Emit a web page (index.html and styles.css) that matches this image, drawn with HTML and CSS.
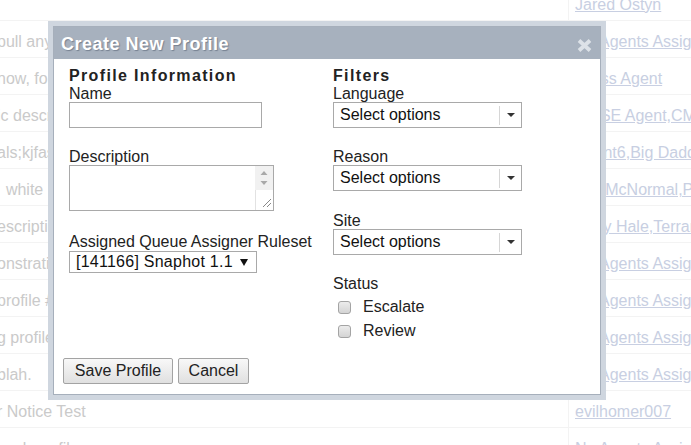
FILE: index.html
```html
<!DOCTYPE html>
<html>
<head>
<meta charset="utf-8">
<title>Create New Profile</title>
<link rel="stylesheet" href="styles.css">
</head>
<body>
<div class="table">
  <div class="row"><div class="c1"></div><div class="c2"><a>Jared Ostyn</a></div></div>
  <div class="row"><div class="c1"><span class="clip">pull anything</span></div><div class="c2"><a>No Agents Assigned</a></div></div>
  <div class="row"><div class="c1"><span class="clip">now, for</span></div><div class="c2"><a>Cross Agent</a></div></div>
  <div class="row"><div class="c1"><span class="clip">ic description</span></div><div class="c2"><a>CMSE Agent,CMI Agent</a></div></div>
  <div class="row"><div class="c1"><span class="clip">als;kjfasdf</span></div><div class="c2"><a>Agent6,Big Daddy</a></div></div>
  <div class="row"><div class="c1"><span class="clip">&nbsp;&nbsp;white</span></div><div class="c2"><a>Joe McNormal,Patty</a></div></div>
  <div class="row"><div class="c1"><span class="clip">escription</span></div><div class="c2"><a>Andy Hale,Terrance</a></div></div>
  <div class="row"><div class="c1"><span class="clip">onstration</span></div><div class="c2"><a>No Agents Assigned</a></div></div>
  <div class="row"><div class="c1"><span class="clip">profile #2</span></div><div class="c2"><a>No Agents Assigned</a></div></div>
  <div class="row"><div class="c1"><span class="clip">g profile</span></div><div class="c2"><a>No Agents Assigned</a></div></div>
  <div class="row"><div class="c1"><span class="clip">blah.</span></div><div class="c2"><a>No Agents Assigned</a></div></div>
  <div class="row"><div class="c1">r Notice Test</div><div class="c2"><a>evilhomer007</a></div></div>
  <div class="row"><div class="c1">nack profile</div><div class="c2"><a>No Agents Assigned</a></div></div>
</div>

<div class="dialog">
  <div class="dlg-inner">
    <div class="titlebar">
      <span class="title">Create New Profile</span>
      <svg class="close" width="15" height="13" viewBox="0 0 15 13"><path d="M2 1.5 L13 11.5 M13 1.5 L2 11.5" stroke="#dde2e8" stroke-width="3.8" stroke-linecap="butt"/></svg>
    </div>
    <div class="content">
      <div class="col col-left">
        <h3 class="heading">Profile Information</h3>
        <label class="lbl">Name</label>
        <input class="txt" type="text">
        <label class="lbl gap">Description</label>
        <div class="ta-wrap">
          <textarea class="ta"></textarea>
          <svg class="sb" width="18" height="44" viewBox="0 0 18 44">
            <rect x="0" y="0" width="18" height="24" fill="#f1f1f1"/>
            <polygon points="5.5,9 12.5,9 9,5" fill="#a9a9a9"/>
            <polygon points="5.5,15 12.5,15 9,19" fill="#a9a9a9"/>
            <line x1="0.5" y1="24" x2="0.5" y2="44" stroke="#e2e2e2"/>
            <line x1="8" y1="41" x2="16" y2="33" stroke="#888"/>
            <line x1="12" y1="41" x2="16" y2="37" stroke="#888"/>
          </svg>
        </div>
        <label class="lbl gap2">Assigned Queue Assigner Ruleset</label>
        <div class="rs">
          <span class="rs-text">[141166] Snaphot 1.1</span>
          <svg class="rs-arrow" width="8" height="7" viewBox="0 0 8 7"><polygon points="0,0 8,0 4,7" fill="#111"/></svg>
        </div>
      </div>
      <div class="col col-right">
        <h3 class="heading">Filters</h3>
        <label class="lbl">Language</label>
        <div class="ms"><span class="ms-text">Select options</span><span class="ms-arrow"><svg width="8" height="4" viewBox="0 0 8 4"><polygon points="0,0 8,0 4,4" fill="#333"/></svg></span></div>
        <label class="lbl gap">Reason</label>
        <div class="ms"><span class="ms-text">Select options</span><span class="ms-arrow"><svg width="8" height="4" viewBox="0 0 8 4"><polygon points="0,0 8,0 4,4" fill="#333"/></svg></span></div>
        <label class="lbl gap3">Site</label>
        <div class="ms"><span class="ms-text">Select options</span><span class="ms-arrow"><svg width="8" height="4" viewBox="0 0 8 4"><polygon points="0,0 8,0 4,4" fill="#333"/></svg></span></div>
        <label class="lbl gap4">Status</label>
        <div class="checks">
          <label class="check"><input type="checkbox" class="cb"><span>Escalate</span></label>
          <label class="check"><input type="checkbox" class="cb"><span>Review</span></label>
        </div>
      </div>
    </div>
    <div class="buttons">
      <button class="btn btn-save">Save Profile</button>
      <button class="btn btn-cancel">Cancel</button>
    </div>
  </div>
</div>
</body>
</html>
```

FILE: styles.css
```css
html, body {
  margin: 0;
  padding: 0;
}
body {
  width: 691px;
  height: 445px;
  overflow: hidden;
  position: relative;
  background: #fff;
  font-family: "Liberation Sans", Arial, sans-serif;
  font-size: 16px;
  color: #222;
}

/* background table */
.table {
  margin-top: -16px;
}
.row {
  display: flex;
  height: 37px;
  box-sizing: border-box;
  border-bottom: 1px solid #f3f3f3;
}
.c1 {
  width: 568px;
  padding-top: 12px;
  line-height: 18px;
  white-space: nowrap;
  overflow: hidden;
  text-indent: -3px;
  color: #cacaca;
}
.clip {
  display: block;
  width: 48px;
  overflow: hidden;
}
.c2 {
  flex: 1;
  border-left: 1px solid #f3f3f3;
  padding: 12px 0 0 6px;
  line-height: 18px;
  white-space: nowrap;
  overflow: hidden;
}
.c2 a {
  color: #c8cfe2;
  text-decoration: underline;
}

/* dialog */
.dialog {
  position: absolute;
  left: 48px;
  top: 21px;
  width: 558px;
  height: 379px;
  box-sizing: border-box;
  border: 5px solid #cfd6df;
  background: #fff;
}
.dlg-inner {
  height: 100%;
  box-sizing: border-box;
  border: 1px solid #a6afbb;
  display: flex;
  flex-direction: column;
}
.titlebar {
  height: 32px;
  flex: none;
  background: #a7b1be;
  display: flex;
  align-items: center;
  padding: 2px 8px 0 7px;
  box-sizing: border-box;
}
.title {
  color: #fff;
  font-weight: bold;
  font-size: 18px;
  letter-spacing: 0.5px;
  line-height: 20px;
  text-shadow: 1px 1px 1px rgba(60, 70, 90, 0.45);
}
.close {
  margin-left: auto;
  margin-top: 3px;
  display: block;
}

.content {
  flex: 1;
  display: flex;
  padding: 8px 0 0 15px;
}
.col-left {
  width: 264px;
}
.heading {
  margin: 0;
  font-size: 16px;
  font-weight: bold;
  letter-spacing: 1.35px;
  line-height: 18px;
  color: #222;
}
.lbl {
  display: block;
  line-height: 17px;
  color: #222;
}
.gap { margin-top: 20px; }
.gap2 { margin-top: 22px; }
.gap3 { margin-top: 21px; }
.gap4 { margin-top: 20px; }

.txt {
  display: block;
  width: 193px;
  height: 26px;
  box-sizing: border-box;
  margin: 0;
  padding: 2px 4px;
  border: 1px solid #a9a9a9;
  font: inherit;
  background: #fff;
}

.ta-wrap {
  position: relative;
  width: 205px;
  height: 46px;
  box-sizing: border-box;
  border: 1px solid #a9a9a9;
  background: #fff;
}
.ta {
  display: block;
  width: 100%;
  height: 100%;
  box-sizing: border-box;
  border: 0;
  margin: 0;
  padding: 2px;
  resize: none;
  overflow: hidden;
  font: inherit;
  outline: none;
}
.sb {
  position: absolute;
  right: 0;
  top: 0;
  display: block;
}

.rs {
  margin-top: 1px;
  width: 188px;
  height: 22px;
  box-sizing: border-box;
  border: 1px solid #a9a9a9;
  display: flex;
  align-items: center;
  padding: 0 8px 0 6px;
  background: #fff;
}
.rs-text {
  line-height: 18px;
  color: #111;
  letter-spacing: 0.25px;
}
.rs-arrow {
  margin-left: auto;
  display: block;
}

.ms {
  width: 189px;
  height: 26px;
  box-sizing: border-box;
  border: 1px solid #a9a9a9;
  display: flex;
  align-items: center;
  padding-left: 6px;
  background: #fff;
}
.ms-text {
  flex: 1;
  line-height: 18px;
  color: #111;
}
.ms-arrow {
  width: 21px;
  height: 19px;
  border-left: 1px solid #d6d6d6;
  display: flex;
  align-items: center;
  justify-content: center;
}
.ms-arrow svg {
  display: block;
}

.checks {
  padding-top: 3px;
}
.check {
  display: flex;
  align-items: center;
  height: 24px;
  padding-left: 5px;
  color: #222;
}
.cb {
  appearance: none;
  -webkit-appearance: none;
  width: 13px;
  height: 13px;
  margin: 0 12px 0 0;
  box-sizing: border-box;
  border: 1px solid #a4a4a4;
  border-radius: 3px;
  background: linear-gradient(#ececec, #d4d4d4);
}

.buttons {
  flex: none;
  display: flex;
  gap: 5px;
  padding: 0 0 10px 9px;
}
.btn {
  height: 26px;
  box-sizing: border-box;
  padding: 0;
  border: 1px solid #a3a3a3;
  border-radius: 2px;
  background: linear-gradient(#f8f8f8, #e0e0e0);
  font-family: inherit;
  font-size: 16px;
  color: #222;
}
.btn-save { width: 110px; }
.btn-cancel { width: 71px; }
```
